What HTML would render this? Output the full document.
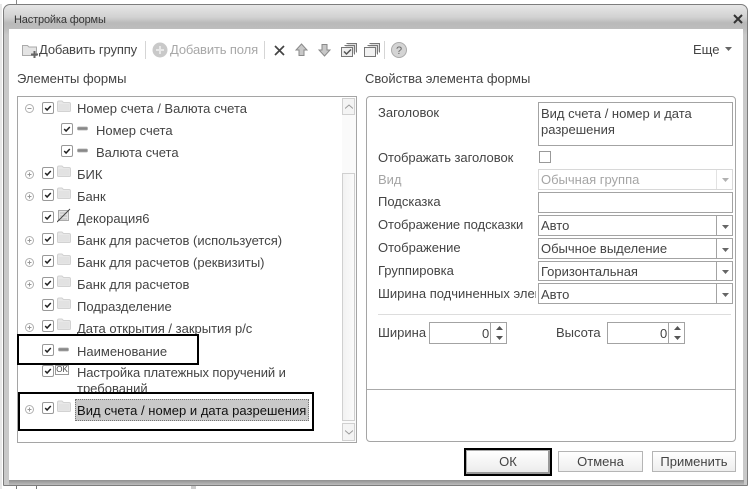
<!DOCTYPE html>
<html lang="ru"><head><meta charset="utf-8"><title>Настройка формы</title>
<style>
html,body{margin:0;padding:0;background:#fff}
body{width:750px;height:489px;overflow:hidden;position:relative;font:13px "Liberation Sans",Arial,sans-serif;color:#444}
div,span,svg{position:absolute;box-sizing:border-box}
.t{white-space:nowrap;line-height:14px;letter-spacing:0}
.f{border:1px solid #a3a3a3;background:#fff}
.d{width:1px;background:#a3a3a3;top:0;bottom:0;right:15px}
</style></head><body>
<svg width="0" height="0" style="left:0;top:0">
<defs>
<symbol id="chk" viewBox="0 0 12 12"><rect x=".5" y=".5" width="11" height="11" rx="1.500" fill="#fff" stroke="#999"/><path d="M3.200 6l1.900 2L8.800 4" fill="none" stroke="#222" stroke-width="1.500"/></symbol>
<symbol id="fld" viewBox="0 0 14 12"><path d="M.5 2.500Q.5 1 2 1h3l1.500 1.500H12Q13.500 2.500 13.500 4v6.500q0 1-1 1h-11q-1 0-1-1z" fill="#e8e8e8" stroke="#d2d2d2"/><rect x="1.500" y="4" width="11" height="6.500" fill="#e2e2e2"/></symbol>
<symbol id="plus" viewBox="0 0 9 9"><circle cx="4.500" cy="4.500" r="4" fill="#fff" stroke="#b0b0b0"/><path d="M2.500 4.500h4M4.500 2.500v4" stroke="#999"/></symbol>
<symbol id="minus" viewBox="0 0 9 9"><circle cx="4.500" cy="4.500" r="4" fill="#fff" stroke="#b0b0b0"/><path d="M2.500 4.500h4" stroke="#999"/></symbol>
<symbol id="dash" viewBox="0 0 11 5"><rect x=".5" y="1" width="10" height="3" rx="1" fill="#888" stroke="#aaa" stroke-width=".8"/></symbol>
<symbol id="tri" viewBox="0 0 7 4"><path d="M0 0h7L3.500 4z" fill="#666"/></symbol>
<symbol id="spin" viewBox="0 0 7 16"><path d="M3.500 1L7 5H0z M0 11h7L3.500 15z" fill="#555"/></symbol>
</defs></svg>

<!-- background fragments -->
<div style="left:16px;top:0;width:1px;height:4px;background:#888"></div>
<div style="left:0;top:4px;width:2px;height:485px;background:#e8e8e8"></div>
<div style="left:16px;top:485px;width:1px;height:4px;background:#777"></div>
<div style="left:36px;top:485px;width:1px;height:4px;background:#777"></div>
<div style="left:191px;top:485px;width:5px;height:4px;background:#ccc"></div>

<!-- window -->
<div style="left:3px;top:4px;width:745px;height:482px;border:1px solid #7d7d7d;border-radius:7px 7px 1px 1px;background:linear-gradient(#e6e6e6 0,#d2d2d2 12px,#b9b9b9 18px,#bdbdbd 24px,#c9c9c9 30px,#c9c9c9 100%)"></div>
<div style="left:9px;top:29px;width:734px;height:451px;background:#fff"></div>
<div style="left:9px;top:480px;width:735px;height:5px;background:linear-gradient(#8f8f8f,#bdbdbd)"></div>

<div class="t" style="left:14px;top:13px;font-size:11px;letter-spacing:-.15px;color:#333">Настройка формы</div>
<svg style="left:733px;top:14px" width="10" height="10" viewBox="0 0 10 10"><path d="M1 1l8 8M9 1l-8 8" stroke="#333" stroke-width="2"/></svg>

<!-- toolbar -->
<svg style="left:22px;top:44px" width="17" height="14" viewBox="0 0 17 14"><path d="M.5 3V1.500h5L7 3h7.500v8.500H.5z" fill="#e4e4e4" stroke="#aaa"/><path d="M9 10.500h7M12.500 7v7" stroke="#666" stroke-width="2"/></svg>
<div class="t" style="left:39px;top:43px;letter-spacing:-.13px">Добавить группу</div>
<div style="left:145px;top:41px;width:1px;height:18px;background:#d5d5d5"></div>
<svg style="left:152px;top:42px" width="16" height="16" viewBox="0 0 16 16"><circle cx="8" cy="8" r="7.500" fill="#c9c9c9"/><path d="M4 8h8M8 4v8" stroke="#e8e8e8" stroke-width="2"/></svg>
<div class="t" style="left:170px;top:43px;color:#a8a8a8;letter-spacing:-.13px">Добавить поля</div>
<div style="left:264px;top:41px;width:1px;height:18px;background:#d5d5d5"></div>
<svg style="left:274px;top:45px" width="11" height="11" viewBox="0 0 11 11"><path d="M1 1l9 9M10 1l-9 9" stroke="#444" stroke-width="1.700"/></svg>
<svg style="left:295px;top:43px" width="13" height="14" viewBox="0 0 13 14"><path d="M6.500 1L12 7H9v5.500H4V7H1z" fill="#c8c8c8" stroke="#8a8a8a"/></svg>
<svg style="left:318px;top:43px" width="13" height="14" viewBox="0 0 13 14"><path d="M6.500 13L12 7H9V1.500H4V7H1z" fill="#c8c8c8" stroke="#8a8a8a"/></svg>
<svg style="left:341px;top:42px" width="16" height="15" viewBox="0 0 16 15"><path d="M5.500 1.500h10v9M3.500 3.500h10v9" fill="#ddd" stroke="#777"/><rect x=".5" y="5.500" width="11" height="9" fill="#eee" stroke="#777"/><path d="M3 9.500l2.500 2.500L10 7.500" fill="none" stroke="#555" stroke-width="1.500"/></svg>
<svg style="left:364px;top:42px" width="16" height="15" viewBox="0 0 16 15"><path d="M5.500 1.500h10v9M3.500 3.500h10v9" fill="#ddd" stroke="#777"/><rect x=".5" y="5.500" width="11" height="9" fill="#f2f2f2" stroke="#777"/></svg>
<div style="left:384px;top:41px;width:1px;height:18px;background:#d5d5d5"></div>
<svg style="left:391px;top:42px" width="16" height="16" viewBox="0 0 16 16"><circle cx="8" cy="8" r="7.500" fill="#d4d4d4" stroke="#aaa"/><text x="8" y="12" text-anchor="middle" font-family="Liberation Sans" font-size="11" fill="#666">?</text></svg>
<div class="t" style="left:693px;top:43px">Еще</div>
<svg style="left:725px;top:47px" width="7" height="4"><use href="#tri"/></svg>

<div class="t" style="left:17px;top:72px">Элементы формы</div>
<div class="t" style="left:365px;top:72px">Свойства элемента формы</div>

<!-- tree -->
<div style="left:17px;top:96px;width:340px;height:347px;border:1px solid #a5a5a5;background:#fff"></div>
<div style="left:342px;top:98px;width:14px;height:343px;background:#fafafa"></div>
<div style="left:342px;top:98px;width:13px;height:17px;border:1px solid #d0d0d0;background:#f4f4f4"></div>
<svg style="left:345px;top:104px" width="8" height="5"><path d="M0 4.500L4 1l4 3.500" fill="none" stroke="#999"/></svg>
<div style="left:342px;top:173px;width:13px;height:248px;border:1px solid #d0d0d0;background:linear-gradient(90deg,#f2f2f2,#fbfbfb)"></div>
<div style="left:342px;top:423px;width:13px;height:18px;border:1px solid #d0d0d0;background:#f4f4f4"></div>
<svg style="left:345px;top:430px" width="8" height="5"><path d="M0 .5L4 4l4-3.500" fill="none" stroke="#999"/></svg>

<!-- tree rows -->
<svg style="left:25px;top:104px" width="9" height="9"><use href="#minus"/></svg>
<svg style="left:42px;top:102px" width="12" height="12"><use href="#chk"/></svg>
<svg style="left:57px;top:100px" width="14" height="12"><use href="#fld"/></svg>
<div class="t" style="left:77px;top:102px">Номер счета / Валюта счета</div>

<svg style="left:61px;top:123px" width="12" height="12"><use href="#chk"/></svg>
<svg style="left:77px;top:126px" width="11" height="5"><use href="#dash"/></svg>
<div class="t" style="left:96px;top:124px">Номер счета</div>

<svg style="left:61px;top:145px" width="12" height="12"><use href="#chk"/></svg>
<svg style="left:77px;top:148px" width="11" height="5"><use href="#dash"/></svg>
<div class="t" style="left:96px;top:146px">Валюта счета</div>

<svg style="left:25px;top:170px" width="9" height="9"><use href="#plus"/></svg>
<svg style="left:42px;top:167px" width="12" height="12"><use href="#chk"/></svg>
<svg style="left:57px;top:165px" width="14" height="12"><use href="#fld"/></svg>
<div class="t" style="left:77px;top:168px">БИК</div>

<svg style="left:25px;top:192px" width="9" height="9"><use href="#plus"/></svg>
<svg style="left:42px;top:189px" width="12" height="12"><use href="#chk"/></svg>
<svg style="left:57px;top:187px" width="14" height="12"><use href="#fld"/></svg>
<div class="t" style="left:77px;top:190px">Банк</div>

<svg style="left:42px;top:211px" width="12" height="12"><use href="#chk"/></svg>
<svg style="left:57px;top:208px" width="14" height="15" viewBox="0 0 14 15"><rect x="1.500" y="2.500" width="10" height="10" fill="#e4e4e4" stroke="#aaa"/><path d="M3 5h7M3 8h7M3 11h7" stroke="#bbb"/><path d="M0 14L13 1" stroke="#444"/></svg>
<div class="t" style="left:77px;top:212px">Декорация6</div>

<svg style="left:25px;top:236px" width="9" height="9"><use href="#plus"/></svg>
<svg style="left:42px;top:233px" width="12" height="12"><use href="#chk"/></svg>
<svg style="left:57px;top:231px" width="14" height="12"><use href="#fld"/></svg>
<div class="t" style="left:77px;top:234px">Банк для расчетов (используется)</div>

<svg style="left:25px;top:258px" width="9" height="9"><use href="#plus"/></svg>
<svg style="left:42px;top:255px" width="12" height="12"><use href="#chk"/></svg>
<svg style="left:57px;top:253px" width="14" height="12"><use href="#fld"/></svg>
<div class="t" style="left:77px;top:256px">Банк для расчетов (реквизиты)</div>

<svg style="left:25px;top:280px" width="9" height="9"><use href="#plus"/></svg>
<svg style="left:42px;top:277px" width="12" height="12"><use href="#chk"/></svg>
<svg style="left:57px;top:275px" width="14" height="12"><use href="#fld"/></svg>
<div class="t" style="left:77px;top:278px">Банк для расчетов</div>

<svg style="left:42px;top:299px" width="12" height="12"><use href="#chk"/></svg>
<svg style="left:57px;top:297px" width="14" height="12"><use href="#fld"/></svg>
<div class="t" style="left:77px;top:300px">Подразделение</div>

<svg style="left:25px;top:323px" width="9" height="9"><use href="#plus"/></svg>
<svg style="left:42px;top:320px" width="12" height="12"><use href="#chk"/></svg>
<svg style="left:57px;top:318px" width="14" height="12"><use href="#fld"/></svg>
<div class="t" style="left:77px;top:322px">Дата открытия / закрытия р/с</div>

<svg style="left:42px;top:344px" width="12" height="12"><use href="#chk"/></svg>
<svg style="left:58px;top:347px" width="11" height="5"><use href="#dash"/></svg>
<div class="t" style="left:77px;top:345px">Наименование</div>

<svg style="left:42px;top:365px" width="12" height="12"><use href="#chk"/></svg>
<div style="left:55px;top:365px;width:14px;height:10px;border:1px solid #999;font-size:8px;line-height:8px;text-align:center;color:#444">OK</div>
<div class="t" style="left:77px;top:366px;letter-spacing:-.1px">Настройка платежных поручений и</div>
<div class="t" style="left:77px;top:382px;height:10px;overflow:hidden">требований</div>

<div style="left:75px;top:399px;width:234px;height:22px;background:#c9c9c9;border:1px dotted #777"></div>
<svg style="left:25px;top:405px" width="9" height="9"><use href="#plus"/></svg>
<svg style="left:42px;top:402px" width="12" height="12"><use href="#chk"/></svg>
<svg style="left:57px;top:400px" width="14" height="12"><use href="#fld"/></svg>
<div class="t" style="left:77px;top:404px;color:#111;letter-spacing:.03px">Вид счета / номер и дата разрешения</div>

<div style="left:17px;top:334px;width:182px;height:31px;border:2px solid #000"></div>
<div style="left:18px;top:392px;width:296px;height:39px;border:2px solid #000"></div>

<!-- properties panel -->
<div style="left:366px;top:96px;width:370px;height:346px;border:1px solid #a5a5a5;border-radius:4px;background:#fff"></div>
<div style="left:367px;top:389px;width:368px;height:1px;background:#aaa"></div>

<div class="t" style="left:378px;top:106px">Заголовок</div>
<div class="f" style="left:538px;top:102px;width:195px;height:44px"></div>
<div class="t" style="left:541px;top:107px">Вид счета / номер и дата</div>
<div class="t" style="left:541px;top:123px">разрешения</div>

<div class="t" style="left:378px;top:151px;letter-spacing:-.05px">Отображать заголовок</div>
<div style="left:539px;top:151px;width:12px;height:12px;border:1px solid #999;background:#fff"></div>

<div class="t" style="left:378px;top:173px;color:#a5a5a5">Вид</div>
<div style="left:538px;top:169px;width:195px;height:21px;border:1px solid #d8d8d8;background:#fff"><div class="d" style="background:#e2e2e2"></div></div>
<div class="t" style="left:541px;top:173px;color:#a5a5a5">Обычная группа</div>
<svg style="left:722px;top:178px" width="7" height="4" opacity=".5"><use href="#tri"/></svg>

<div class="t" style="left:378px;top:195px">Подсказка</div>
<div class="f" style="left:538px;top:192px;width:195px;height:21px"></div>

<div class="t" style="left:378px;top:218px;letter-spacing:-.05px">Отображение подсказки</div>
<div class="f" style="left:538px;top:215px;width:195px;height:21px"><div class="d"></div></div>
<div class="t" style="left:541px;top:219px">Авто</div>
<svg style="left:722px;top:225px" width="7" height="4"><use href="#tri"/></svg>

<div class="t" style="left:378px;top:241px">Отображение</div>
<div class="f" style="left:538px;top:238px;width:195px;height:21px"><div class="d"></div></div>
<div class="t" style="left:541px;top:242px">Обычное выделение</div>
<svg style="left:722px;top:248px" width="7" height="4"><use href="#tri"/></svg>

<div class="t" style="left:378px;top:264px">Группировка</div>
<div class="f" style="left:538px;top:261px;width:195px;height:20px"><div class="d"></div></div>
<div class="t" style="left:541px;top:265px">Горизонтальная</div>
<svg style="left:722px;top:270px" width="7" height="4"><use href="#tri"/></svg>

<div class="t" style="left:378px;top:287px;width:158px;overflow:hidden">Ширина подчиненных элементов</div>
<div class="f" style="left:538px;top:283px;width:195px;height:21px"><div class="d"></div></div>
<div class="t" style="left:541px;top:288px">Авто</div>
<svg style="left:722px;top:293px" width="7" height="4"><use href="#tri"/></svg>

<div style="left:378px;top:314px;width:353px;height:1px;background:#ddd"></div>

<div class="t" style="left:378px;top:326px">Ширина</div>
<div class="f" style="left:429px;top:322px;width:78px;height:22px"><div class="d"></div></div>
<div class="t" style="left:482px;top:327px">0</div>
<svg style="left:496px;top:325px" width="7" height="16"><use href="#spin"/></svg>

<div class="t" style="left:556px;top:326px">Высота</div>
<div class="f" style="left:607px;top:322px;width:78px;height:22px"><div class="d"></div></div>
<div class="t" style="left:660px;top:327px">0</div>
<svg style="left:674px;top:325px" width="7" height="16"><use href="#spin"/></svg>

<!-- buttons -->
<div style="left:464px;top:448px;width:88px;height:28px;border:2px solid #000;background:#fff"></div>
<div style="left:466px;top:450px;width:84px;height:24px;border:1px solid #aaa;border-bottom:2px solid #999;border-right:2px solid #999;background:linear-gradient(#fff,#ececec)"></div>
<div class="t" style="left:466px;top:455px;width:84px;text-align:center">ОК</div>
<div style="left:558px;top:451px;width:85px;height:21px;border:1px solid #b5b5b5;background:linear-gradient(#fff,#eee)"></div>
<div class="t" style="left:558px;top:455px;width:85px;text-align:center">Отмена</div>
<div style="left:652px;top:451px;width:84px;height:21px;border:1px solid #b5b5b5;background:linear-gradient(#fff,#eee)"></div>
<div class="t" style="left:652px;top:455px;width:84px;text-align:center">Применить</div>
</body></html>
